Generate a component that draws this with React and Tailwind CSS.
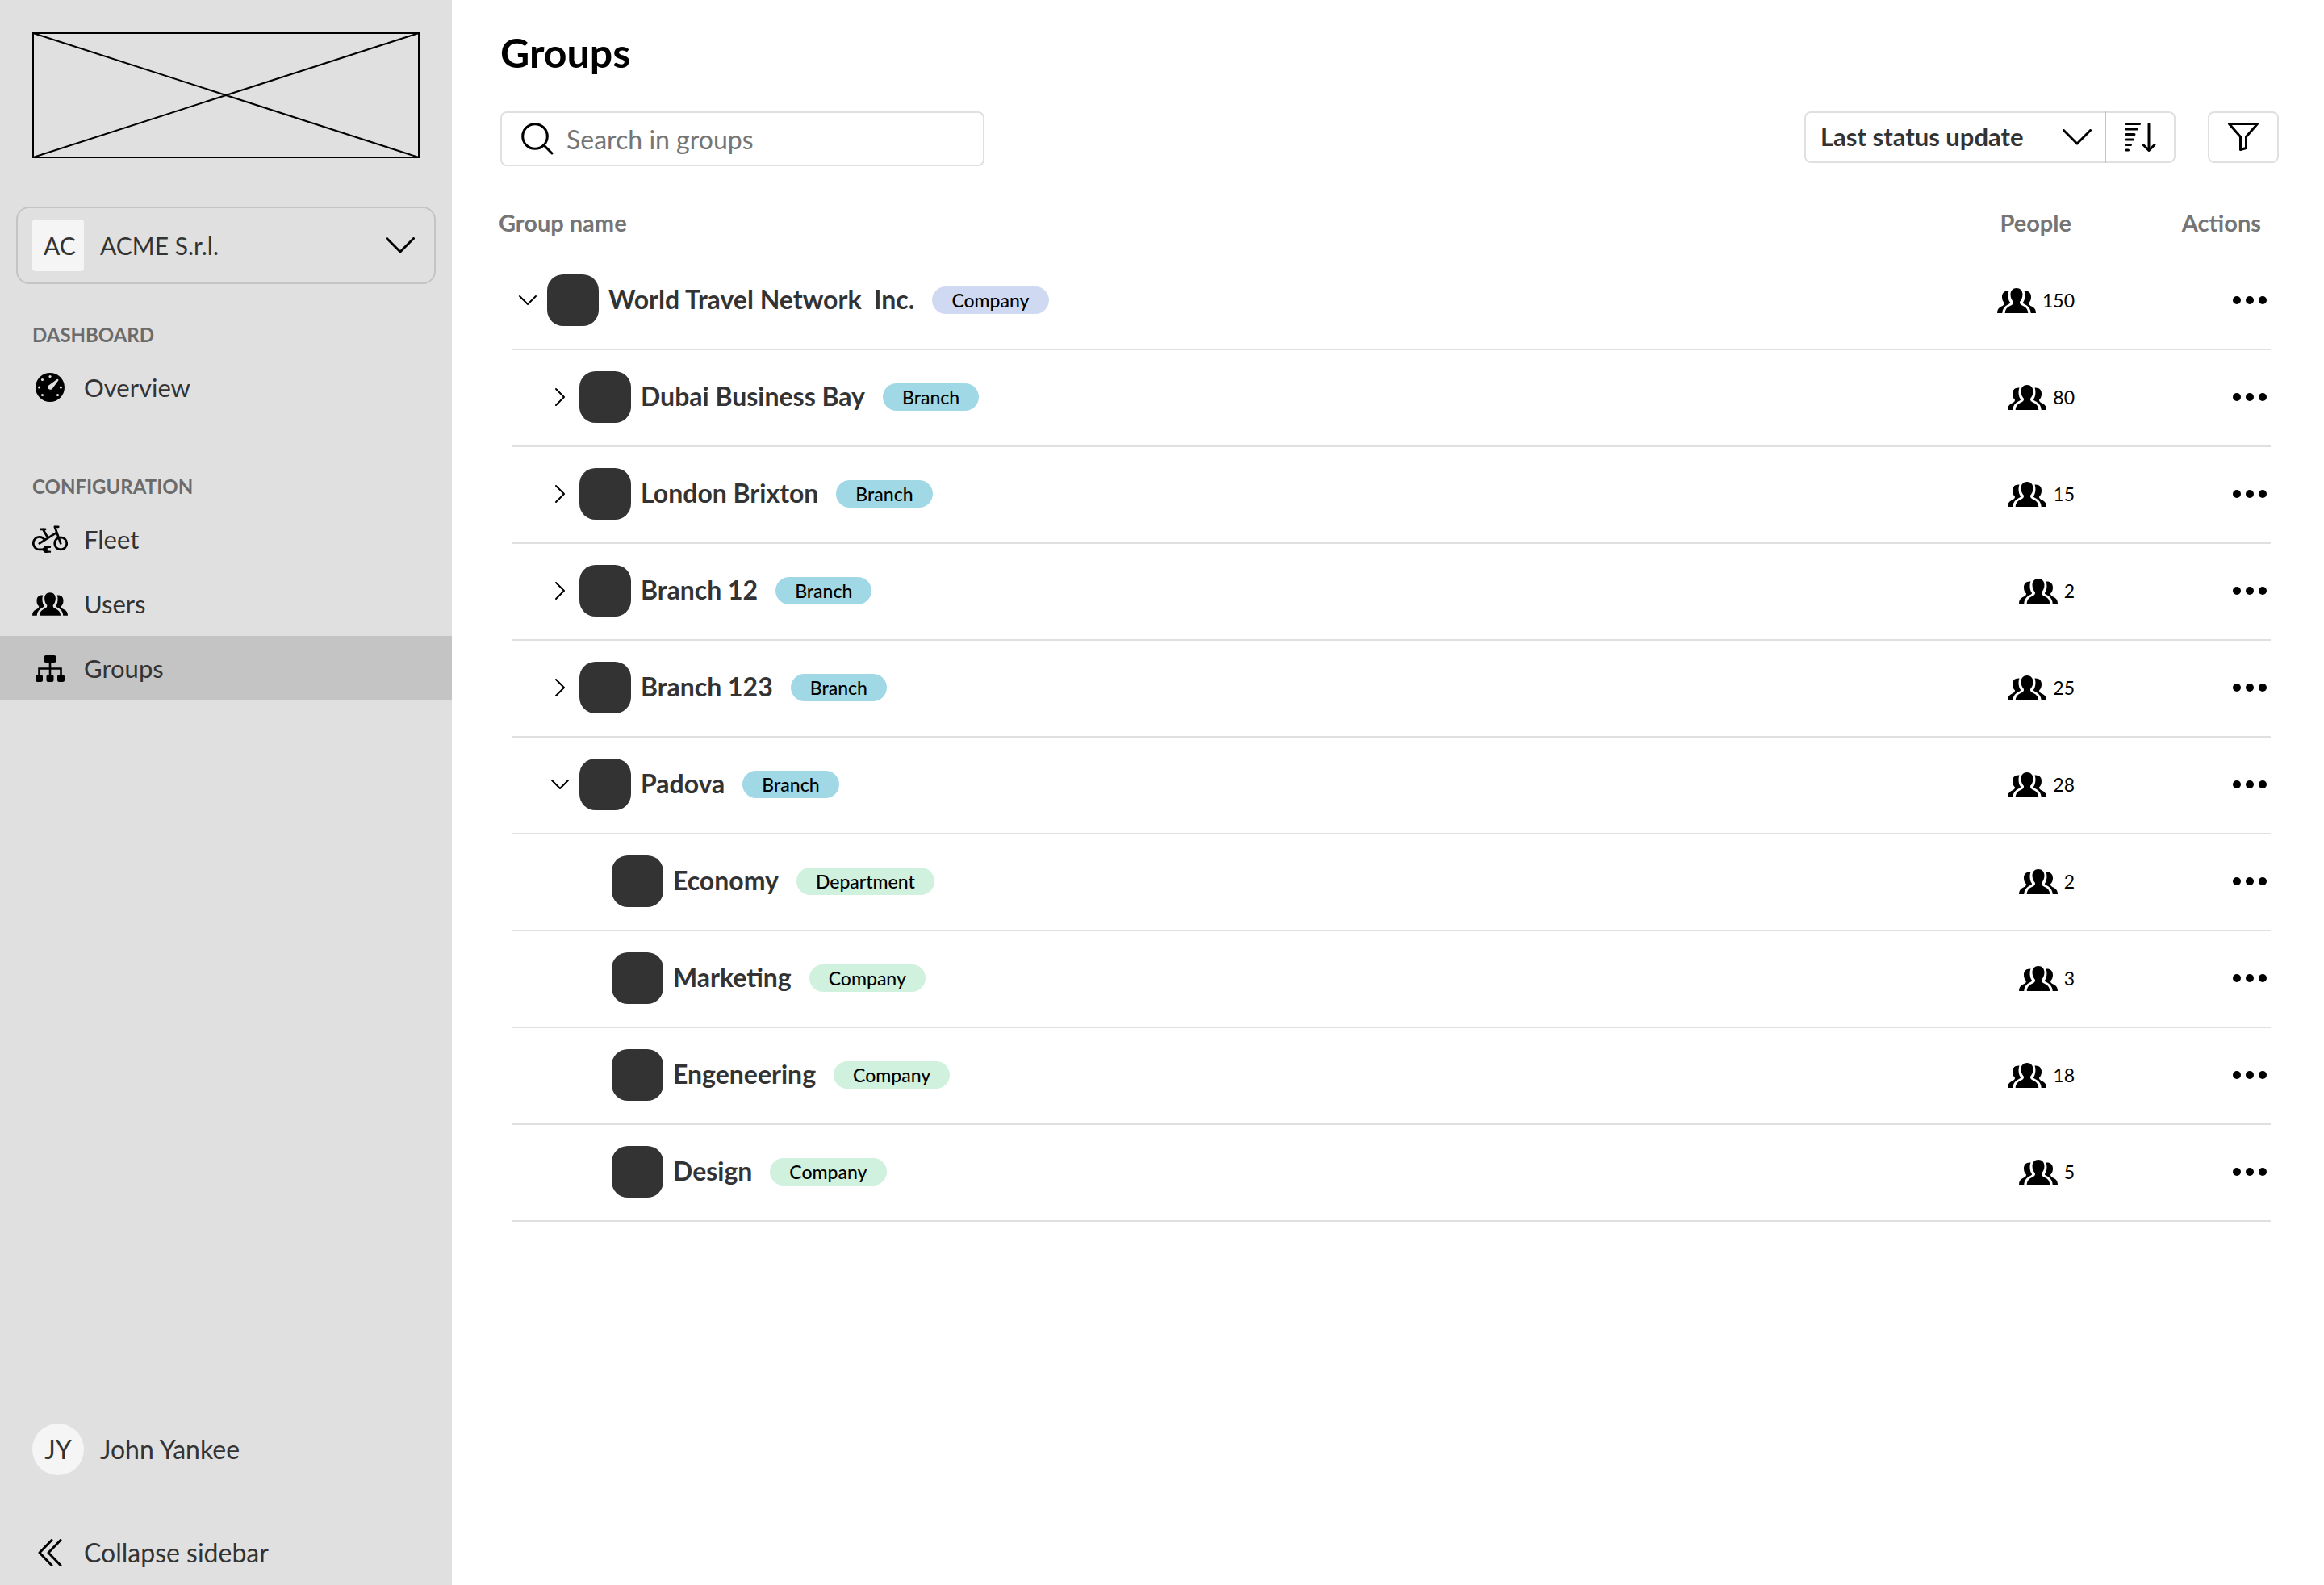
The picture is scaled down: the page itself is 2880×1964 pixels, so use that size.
const navSections = [
  { title: 'DASHBOARD', items: [{ label: 'Overview', icon: GaugeIcon }] },
  {
    title: 'CONFIGURATION',
    items: [
      { label: 'Fleet', icon: BikeIcon },
      { label: 'Users', icon: PeopleIcon },
      { label: 'Groups', icon: TreeIcon, active: true },
    ],
  },
];

const groups = [
  { name: 'World Travel Network  Inc.', tag: 'Company', tone: 'blue', people: 150, level: 0, state: 'open' },
  { name: 'Dubai Business Bay', tag: 'Branch', tone: 'cyan', people: 80, level: 1, state: 'closed' },
  { name: 'London Brixton', tag: 'Branch', tone: 'cyan', people: 15, level: 1, state: 'closed' },
  { name: 'Branch 12', tag: 'Branch', tone: 'cyan', people: 2, level: 1, state: 'closed' },
  { name: 'Branch 123', tag: 'Branch', tone: 'cyan', people: 25, level: 1, state: 'closed' },
  { name: 'Padova', tag: 'Branch', tone: 'cyan', people: 28, level: 1, state: 'open' },
  { name: 'Economy', tag: 'Department', tone: 'green', people: 2, level: 2 },
  { name: 'Marketing', tag: 'Company', tone: 'green', people: 3, level: 2 },
  { name: 'Engeneering', tag: 'Company', tone: 'green', people: 18, level: 2 },
  { name: 'Design', tag: 'Company', tone: 'green', people: 5, level: 2 },
];

const tones = { blue: 'bg-[#cfdaf2]', cyan: 'bg-[#a0d9e5]', green: 'bg-[#cff1de]' };
const indents = ['pl-0', 'pl-10', 'pl-20'];

const line = { fill: 'none', stroke: 'currentColor', strokeLinecap: 'round', strokeLinejoin: 'round' };

function GaugeIcon() {
  return (
    <svg viewBox="0 0 36 36" className="size-9" aria-hidden="true">
      <circle cx="18" cy="18" r="18" fill="black" />
      <g fill="#e0e0e0">
        <circle cx="18" cy="4.6" r="1.6" />
        <circle cx="8.5" cy="8.5" r="1.6" />
        <circle cx="4.6" cy="18" r="1.6" />
        <circle cx="8.5" cy="27.5" r="1.6" />
        <circle cx="27.5" cy="27.5" r="1.6" />
        <circle cx="31.4" cy="18" r="1.6" />
        <path d="M26.6 7.9C27.6 7.2 29 8.5 28.2 9.5L21 19.6C19 22 14.8 20.5 15.1 17.6C15.2 16.6 15.7 16 16.4 15.5Z" />
      </g>
    </svg>
  );
}

function BikeIcon() {
  return (
    <svg viewBox="0 0 45 35" className="h-[35px] w-[45px]" aria-hidden="true" {...line} strokeWidth="2.8">
      <path d="M15.5 17.5A7.8 8 0 1 0 9 30.2H14" />
      <circle cx="36" cy="22.5" r="7.7" />
      <path d="M9 22.5L30.5 9M10.5 4.5H16.5M13.5 4.5L19.5 15M28.5 1.4H33M28.5 1.4L36 22.5" />
      <path d="M17 27H22.5M17 33H22.5" strokeWidth="2.4" />
      <path d="M13 30L16.5 26.5H18.5V33.5H16.5Z" fill="currentColor" strokeWidth="1.5" />
    </svg>
  );
}

function PeopleIcon({ className = 'h-[29px] w-[45px]' }) {
  return (
    <svg viewBox="0 0 48 31" className={className} fill="currentColor" aria-hidden="true">
      <path d="M24 0C28.5 0 31.5 3 31.5 8C31.5 12 29.8 15 28 17C27.8 19.5 29 20.5 32 22C36 23.8 38 26.5 38.3 31H9.7C10 26.5 12 23.8 16 22C19 20.5 20.2 19.5 20 17C18.2 15 16.5 12 16.5 8C16.5 3 19.5 0 24 0Z" />
      <path d="M14.5 3.6C9 3.2 6 6 6 11C6 14.5 7 16.5 9 18.5C9 21 7.5 21.5 5 22.8C1.5 24.5 0 27 0 31H6.3C6.6 26 9 22.5 14 20C16.3 18.8 16.5 18 15.5 17C13.5 14 12.8 8 14.5 3.6Z" />
      <path d="M33.5 3.6C39 3.2 42 6 42 11C42 14.5 41 16.5 39 18.5C39 21 40.5 21.5 43 22.8C46.5 24.5 48 27 48 31H41.7C41.4 26 39 22.5 34 20C31.7 18.8 31.5 18 32.5 17C34.5 14 35.2 8 33.5 3.6Z" />
    </svg>
  );
}

function TreeIcon() {
  return (
    <svg viewBox="0 0 36 33" className="h-[33px] w-9" fill="currentColor" aria-hidden="true">
      <rect x="10.5" width="15" height="9" rx="2.5" />
      <rect y="24" width="9" height="9" rx="2.5" />
      <rect x="13.5" y="24" width="9" height="9" rx="2.5" />
      <rect x="27" y="24" width="9" height="9" rx="2.5" />
      <path d="M4.5 25V16.5H31.5V25M18 8V25" fill="none" stroke="currentColor" strokeWidth="2.6" />
    </svg>
  );
}

function ChevronDown() {
  return (
    <svg viewBox="0 0 36 20" className="h-5 w-9" aria-hidden="true" {...line} strokeWidth="3">
      <path d="M1.5 1.5L18 18L34.5 1.5" />
    </svg>
  );
}

function RowChevron({ state }) {
  return (
    <svg viewBox="0 0 20 20" className="size-5 overflow-visible" aria-hidden="true" {...line} strokeWidth="2">
      <path d={state === 'open' ? 'M0 5L10 15L20 5' : 'M5 0L15 10L5 20'} />
    </svg>
  );
}

function CollapseIcon() {
  return (
    <svg viewBox="0 0 30 34" className="h-[34px] w-[30px]" aria-hidden="true" {...line} strokeWidth="3">
      <path d="M17 1.5L2 17L17 32.5M28 1.5L13 17L28 32.5" />
    </svg>
  );
}

function SearchIcon() {
  return (
    <svg viewBox="0 0 40 40" className="size-10" aria-hidden="true" {...line} strokeWidth="3">
      <circle cx="17" cy="17" r="15.3" />
      <path d="M27.8 27.8L38 38" />
    </svg>
  );
}

function SortIcon() {
  return (
    <svg viewBox="0 0 38 36" className="h-9 w-[38px] overflow-visible" aria-hidden="true" {...line} strokeWidth="3">
      <path d="M2 1.5H18.5M2 8H15M2 14.5H12M2 21H10.5M2 27.5H7.5M2 34H4.5M30 1.5V34M23 27.5L30 34.3L37 27.5" />
    </svg>
  );
}

function FilterIcon() {
  return (
    <svg viewBox="0 0 38 36" className="h-9 w-[38px]" aria-hidden="true" {...line} strokeWidth="3">
      <path d="M1.5 1.5H36.5L22.5 17.5V31.5L15.5 33.5V17.5Z" />
    </svg>
  );
}

function Sidebar() {
  return (
    <aside className="flex w-[560px] shrink-0 flex-col bg-[#e0e0e0] text-[31px] leading-9 text-[#333333]">
      <svg viewBox="0 0 480 156" className="mx-10 mt-10" role="img" aria-label="Logo" fill="none" stroke="black" strokeWidth="2">
        <rect x="1" y="1" width="478" height="154" />
        <path d="M1 1L479 155M479 1L1 155" />
      </svg>

      <button type="button" className="mx-5 mt-15 flex h-24 items-center rounded-2xl border-2 border-[#c4c4c4] px-[18px] text-[30px]">
        <span className="flex size-16 items-center justify-center rounded bg-[#f5f5f5] pl-1">AC</span>
        <span className="ml-5">ACME S.r.l.</span>
        <span className="ml-auto pr-1.5 text-black"><ChevronDown /></span>
      </button>

      <nav className="mt-9 flex flex-col gap-14">
        {navSections.map((section) => (
          <section key={section.title}>
            <h2 className="flex h-[52px] items-center px-10 pt-0.5 text-2xl font-bold text-[#6b6b6b]">{section.title}</h2>
            <ul>
              {section.items.map(({ label, icon: Icon, active }) => (
                <li key={label}>
                  <a href="#" className={`flex h-20 items-center gap-5 px-10 ${active ? 'bg-[#c4c4c4]' : ''}`}>
                    <span className="flex w-11 justify-center text-black"><Icon /></span>
                    {label}
                  </a>
                </li>
              ))}
            </ul>
          </section>
        ))}
      </nav>

      <div className="mt-auto flex items-center gap-5 px-10 text-[32px]">
        <span className="flex size-16 items-center justify-center rounded-full bg-[#f5f5f5]">JY</span>
        John Yankee
      </div>
      <button type="button" className="mt-14 flex h-20 items-center gap-5 px-10 text-[32px]">
        <span className="flex w-11 justify-center text-black"><CollapseIcon /></span>
        Collapse sidebar
      </button>
    </aside>
  );
}

function Toolbar() {
  return (
    <div className="mt-10 flex items-start justify-between">
      <div className="flex h-[68px] w-[600px] items-center gap-4 rounded-lg border-2 border-[#e0e0e0] px-6">
        <SearchIcon />
        <input
          type="text"
          aria-label="Search in groups"
          placeholder="Search in groups"
          className="h-full min-w-0 flex-1 text-[32px] leading-[48px] outline-none placeholder:text-[#757575]"
        />
      </div>
      <div className="flex gap-10">
        <div className="flex h-16 rounded-lg border-2 border-[#e0e0e0]">
          <div className="relative flex w-[370px] items-center">
            <select
              aria-label="Sort by"
              className="size-full appearance-none pb-0.5 pl-[18px] text-[31px] leading-9 font-bold text-[#333333] outline-none"
            >
              <option>Last status update</option>
            </select>
            <span className="pointer-events-none absolute right-4"><ChevronDown /></span>
          </div>
          <button type="button" aria-label="Sort direction" className="-my-0.5 flex w-[86px] items-center justify-center border-l-2 border-[#c4c4c4]">
            <SortIcon />
          </button>
        </div>
        <button type="button" aria-label="Filter" className="flex h-16 w-[88px] items-center justify-center rounded-lg border-2 border-[#e0e0e0]">
          <FilterIcon />
        </button>
      </div>
    </div>
  );
}

function GroupRow({ group }) {
  return (
    <tr className="h-[120px] [&>td]:border-b-2 [&>td]:border-[#e0e0e0] [&>td]:pb-0.5">
      <td>
        <div className={`flex items-center ${indents[group.level]}`}>
          {group.state ? (
            <button type="button" aria-label={`Toggle ${group.name}`} className="mr-3.5 ml-2.5 size-5">
              <RowChevron state={group.state} />
            </button>
          ) : (
            <span className="w-11" />
          )}
          <span className="size-16 rounded-[20px] bg-[#333333]" />
          <span className="ml-3 pb-0.5 text-[32px] leading-9 font-bold whitespace-pre text-[#333333]">{group.name}</span>
          <span className={`ml-[22px] flex h-[34px] items-center rounded-full px-6 text-[23px] leading-7 font-medium ${tones[group.tone]}`}>
            {group.tag}
          </span>
        </div>
      </td>
      <td>
        <div className="flex items-center justify-end gap-2 text-[23px] leading-7">
          <PeopleIcon className="h-[31px] w-12" />
          {group.people}
        </div>
      </td>
      <td>
        <button type="button" aria-label={`Actions for ${group.name}`} className="ml-auto flex h-10 items-center gap-1.5 px-[5px]">
          <span className="size-2.5 rounded-full bg-black" />
          <span className="size-2.5 rounded-full bg-black" />
          <span className="size-2.5 rounded-full bg-black" />
        </button>
      </td>
    </tr>
  );
}

export default function App() {
  return (
    <div className="flex min-h-screen bg-white font-['Lato',sans-serif] text-black">
      <Sidebar />
      <main className="min-w-0 flex-1 pt-8 pr-14 pl-[60px]">
        <h1 className="text-[50px] leading-[66px] font-bold">Groups</h1>
        <Toolbar />
        <div className="mt-[52px] mr-2.5 ml-3.5">
          <table className="w-full border-separate border-spacing-0">
            <thead>
              <tr className="h-14 text-[29px] leading-9 text-[#757575]">
                <th className="p-0 text-left align-top"><span className="-ml-4">Group name</span></th>
                <th className="w-52 pr-1 text-right align-top">People</th>
                <th className="w-[243px] pr-3 text-right align-top">Actions</th>
              </tr>
            </thead>
            <tbody>
              {groups.map((group) => (
                <GroupRow key={group.name} group={group} />
              ))}
            </tbody>
          </table>
        </div>
      </main>
    </div>
  );
}
